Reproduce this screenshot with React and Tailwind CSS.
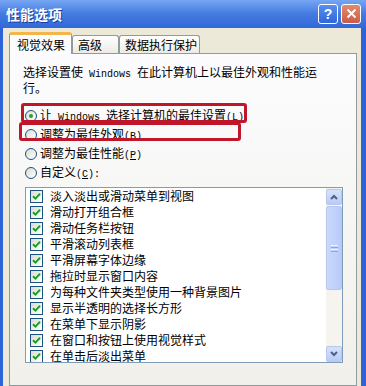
import React from "react";

const items = [
  "淡入淡出或滑动菜单到视图",
  "滑动打开组合框",
  "滑动任务栏按钮",
  "平滑滚动列表框",
  "平滑屏幕字体边缘",
  "拖拉时显示窗口内容",
  "为每种文件夹类型使用一种背景图片",
  "显示半透明的选择长方形",
  "在菜单下显示阴影",
  "在窗口和按钮上使用视觉样式",
  "在单击后淡出菜单",
];

// half-width latin, like the monospaced latin of the system font
const M = ({ children }) => (
  <span className="font-['Liberation_Mono',monospace] text-[10px] leading-none">{children}</span>
);

const Key = ({ k }) => (
  <M>
    (<span className="underline">{k}</span>)
  </M>
);

const Radio = ({ checked, children }) => (
  <div className="h-[19px] flex items-center pl-[2px] gap-[3px]">
    <span className="w-[12px] h-[12px] rounded-full border border-[#1c5180] bg-gradient-to-br from-[#dcdcd5] to-white flex items-center justify-center">
      {checked && <span className="w-[4px] h-[4px] rounded-full bg-[#2ba02b]" />}
    </span>
    <span className="leading-[14px] -mt-[1px]">{children}</span>
  </div>
);

const Check = () => (
  <span className="w-[13px] h-[13px] border border-[#1c5180] bg-gradient-to-br from-[#dcdcd5] to-white flex items-center justify-center shrink-0">
    <svg width="9" height="9" viewBox="0 0 9 9">
      <path d="M1 4.2 L3.4 6.6 L8 1.8" fill="none" stroke="#21a121" strokeWidth="2" />
    </svg>
  </span>
);

const Arrow = ({ up }) => (
  <div className="h-[16px] rounded-[2px] border border-[#b7c7ee] bg-gradient-to-b from-[#d6e1fc] to-[#b9cbf7] flex items-center justify-center">
    <svg width="8" height="6" viewBox="0 0 8 6">
      <path
        d={up ? "M1 5 L4 2 L7 5" : "M1 1 L4 4 L7 1"}
        fill="none"
        stroke="#4d6185"
        strokeWidth="2"
      />
    </svg>
  </div>
);

export default function App() {
  return (
    <div className="w-[366px] h-[386px] overflow-hidden relative flex flex-col bg-[#ece9d8] font-['Noto_Sans_CJK_SC',sans-serif] text-[12px] text-black">
      {/* Title bar */}
      <div className="h-[28px] shrink-0 flex items-center pl-[6px] pr-[5px] bg-gradient-to-b from-[#76a6f2] via-[#447ae0] to-[#3168d8]">
        <span className="text-white font-bold text-[14px] [text-shadow:1px_1px_0_#1a3f9c]">性能选项</span>
        <div className="ml-auto flex gap-[3px] mb-[1px]">
          <div className="w-[20px] h-[20px] rounded-[3px] border border-white bg-gradient-to-b from-[#5a8fee] to-[#2f66da] flex items-center justify-center text-white font-bold text-[14px] leading-none font-['Liberation_Sans',sans-serif]">
            ?
          </div>
          <div className="w-[20px] h-[20px] rounded-[3px] border border-white bg-gradient-to-b from-[#e08a70] to-[#c95c47] flex items-center justify-center">
            <svg width="11" height="11" viewBox="0 0 11 11">
              <path d="M1.5 1.5 L9.5 9.5 M9.5 1.5 L1.5 9.5" stroke="white" strokeWidth="2" />
            </svg>
          </div>
        </div>
      </div>

      {/* Body */}
      <div className="flex-1 flex flex-col border-l-[3px] border-r-[5px] border-[#2d63d6] pl-[6px] pr-[4px]">
        {/* Tabs */}
        <div className="flex items-end pt-[4px] relative z-10 -mb-[1px]">
          <div className="w-[63px] h-[22px] pl-[7px] flex items-center bg-[#fcfcfe] border-x border-[#919b9c] border-t-[3px] border-t-[#f3b64b] rounded-t-[3px]">
            视觉效果
          </div>
          <div className="w-[47px] h-[18px] mb-[1px] pl-[5px] flex items-center bg-gradient-to-b from-white to-[#ecebe5] border-x border-t border-[#919b9c] rounded-t-[3px]">
            高级
          </div>
          <div className="w-[81px] h-[18px] mb-[1px] pl-[5px] flex items-center bg-gradient-to-b from-white to-[#ecebe5] border-x border-t border-[#919b9c] rounded-t-[3px]">
            数据执行保护
          </div>
        </div>

        {/* Tab panel */}
        <div className="flex-1 border border-[#919b9c] bg-gradient-to-b from-[#fcfcfe] to-[#f1f0ea] pl-[13px] pt-[10px]">
          <p className="leading-[15px]">
            选择设置使<M> Windows </M>在此计算机上以最佳外观和性能运
            <br />
            行。
          </p>

          <div className="mt-[11px]">
            <Radio checked>
              让<M> Windows </M>选择计算机的最佳设置<Key k="L" />
            </Radio>
            <Radio>
              调整为最佳外观<Key k="B" />
            </Radio>
            <Radio>
              调整为最佳性能<Key k="P" />
            </Radio>
            <Radio>
              自定义<Key k="C" />
              <M>:</M>
            </Radio>
          </div>

          {/* Checkbox list */}
          <div className="ml-[2px] mt-[5px] w-[318px] h-[176px] border border-[#7f9db9] bg-white flex">
            <div className="flex-1 overflow-hidden">
              {items.map((t) => (
                <div key={t} className="h-[16px] flex items-center pl-[4px] gap-[7px]">
                  <Check />
                  <span className="whitespace-nowrap leading-[14px]">{t}</span>
                </div>
              ))}
            </div>
            <div className="w-[16px] flex flex-col bg-[#f5f4ef] pt-[1px]">
              <Arrow up />
              <div className="h-[84px] mt-[1px] rounded-[2px] border border-[#b7c7ee] bg-gradient-to-r from-[#c9d8fc] to-[#b8cbf8] flex flex-col items-center justify-center gap-[1px]">
                <span className="w-[7px] h-[1px] bg-[#eef3fe]" />
                <span className="w-[7px] h-[1px] bg-[#8ca4de]" />
                <span className="w-[7px] h-[1px] bg-[#eef3fe]" />
                <span className="w-[7px] h-[1px] bg-[#8ca4de]" />
              </div>
              <div className="flex-1" />
              <Arrow />
            </div>
          </div>
        </div>
      </div>

      {/* Red annotation boxes */}
      <div className="absolute left-[21px] top-[103px] w-[226px] h-[20px] border-[3px] border-[#c0162a] rounded-[3px]" />
      <div className="absolute left-[19px] top-[122px] w-[222px] h-[19px] border-[3px] border-[#c0162a] rounded-[3px]" />
    </div>
  );
}
